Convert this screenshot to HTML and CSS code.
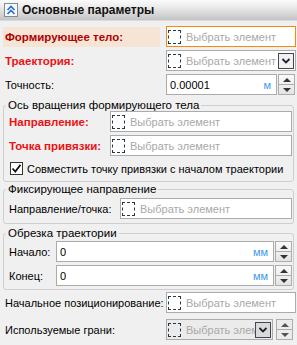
FILE: index.html
```html
<!DOCTYPE html>
<html lang="ru">
<head>
    <meta charset="UTF-8">
    <title>Основные параметры</title>
    <link rel="stylesheet" href="styles.css">
</head>
<body>
    <div class="panel">
        <div class="header">
            <span class="collapse">
                <svg width="10" height="10" viewBox="0 0 10 10"><path d="M1.5 5 L5 1.5 L8.5 5 M1.5 9 L5 5.5 L8.5 9" fill="none" stroke="#1f6fd0" stroke-width="1.6"/></svg>
            </span>
            <span class="title">Основные параметры</span>
        </div>

        <div class="row r1">
            <div class="label hl">Формирующее тело:</div>
            <div class="field active"><span class="pick"></span><span class="ph">Выбрать элемент</span></div>
        </div>
        <div class="row r2">
            <div class="label red">Траектория:</div>
            <div class="field"><span class="pick"></span><span class="ph">Выбрать элемент</span><span class="drop"><svg width="10" height="8" viewBox="0 0 10 8"><path d="M1.5 2 L5 5.5 L8.5 2" fill="none" stroke="#223" stroke-width="1.8"/></svg></span></div>
        </div>
        <div class="row r3 sp">
            <div class="label">Точность:</div>
            <div class="field num"><span class="val">0.00001</span><span class="unit">м</span></div>
            <div class="spin"><span class="up"></span><span class="dn"></span></div>
        </div>

        <fieldset class="group g1">
            <legend>Ось вращения формирующего тела</legend>
            <div class="row">
                <div class="label red w1">Направление:</div>
                <div class="field"><span class="pick"></span><span class="ph">Выбрать элемент</span></div>
            </div>
            <div class="row">
                <div class="label red w1">Точка привязки:</div>
                <div class="field"><span class="pick"></span><span class="ph">Выбрать элемент</span></div>
            </div>
            <label class="check">
                <span class="box"><svg width="11" height="11" viewBox="0 0 11 11"><path d="M1.5 5.5 L4.3 8.5 L9.5 1.8" fill="none" stroke="#111" stroke-width="1.8"/></svg></span>
                Совместить точку привязки с началом траектории
            </label>
        </fieldset>

        <fieldset class="group g2">
            <legend>Фиксирующее направление</legend>
            <div class="row">
                <div class="label w2">Направление/точка:</div>
                <div class="field"><span class="pick"></span><span class="ph">Выбрать элемент</span></div>
            </div>
        </fieldset>

        <fieldset class="group g3">
            <legend>Обрезка траектории</legend>
            <div class="row">
                <div class="label w3">Начало:</div>
                <div class="field num"><span class="val">0</span><span class="unit">мм</span></div>
                <div class="spin"><span class="up"></span><span class="dn"></span></div>
            </div>
            <div class="row">
                <div class="label w3">Конец:</div>
                <div class="field num"><span class="val">0</span><span class="unit">мм</span></div>
                <div class="spin"><span class="up"></span><span class="dn"></span></div>
            </div>
        </fieldset>

        <div class="row r4">
            <div class="label">Начальное позиционирование:</div>
            <div class="field"><span class="pick"></span><span class="ph">Выбрать элемент</span></div>
        </div>
        <div class="row r5">
            <div class="label">Используемые грани:</div>
            <div class="field off"><span class="pick"></span><span class="ph">Выбрать элемент</span><span class="drop"><svg width="10" height="8" viewBox="0 0 10 8"><path d="M1.5 2 L5 5.5 L8.5 2" fill="none" stroke="#223" stroke-width="1.8"/></svg></span></div>
            <div class="spin off"><span class="up"></span><span class="dn"></span></div>
        </div>
    </div>
</body>
</html>
```

FILE: styles.css
```css
* {
    box-sizing: border-box;
}
body {
    margin: 0;
    background: #f0f0f0;
    font-family: 'Liberation Sans', Arial, sans-serif;
    font-size: 11px;
    color: #000;
}
.panel {
    width: 297px;
    height: 345px;
    overflow: hidden;
}
.header {
    height: 21px;
    display: flex;
    align-items: center;
    background: linear-gradient(#fbfbfb, #e8e8e8 40%, #c4c4c4);
    border-bottom: 1px solid #dadada;
}
.collapse {
    width: 14px;
    height: 14px;
    margin-left: 4px;
    border: 1px solid #7f8c99;
    background: #f8f8f8;
    display: flex;
    align-items: center;
    justify-content: center;
}
.title {
    margin-left: 4px;
    font-weight: bold;
    font-size: 12px;
    color: #111;
}
.row {
    display: flex;
    align-items: center;
    height: 21px;
    padding-right: 1px;
}
.r1 { margin-top: 5px; }
.r2 { margin-top: 3px; }
.r3 { margin-top: 3px; }
.r4 { margin-top: 2px; }
.r5 { margin-top: 6px; }
.row.sp {
    padding-right: 2px;
}
.label {
    width: 166px;
    flex: none;
    padding-left: 5px;
    white-space: nowrap;
}
.label.hl {
    width: 157px;
    margin-left: 3px;
    margin-right: 6px;
    padding-left: 2px;
    height: 20px;
    line-height: 20px;
    background: #f6e4d4;
    color: #b00000;
    font-weight: bold;
    font-size: 11.5px;
}
.label.red {
    color: #ee1111;
    font-weight: bold;
    font-size: 11.5px;
}
.field {
    flex: 1;
    min-width: 0;
    height: 21px;
    display: flex;
    align-items: center;
    border: 1px solid #ababab;
    background: #fff;
    overflow: hidden;
    white-space: nowrap;
}
.field.active {
    border-color: #f58a0a;
}
.field.off {
    background: #ebebeb;
    flex: none;
    width: 107px;
}
.pick {
    width: 13px;
    height: 14px;
    margin: 0 5px 0 1px;
    border: 1px dashed #23384a;
    flex: none;
}
.ph {
    flex: 1;
    min-width: 0;
    color: #a8a8a8;
    overflow: hidden;
}
.drop {
    width: 16px;
    height: 16px;
    margin-right: 1px;
    border: 1px solid #3e4752;
    background: #f2f2f2;
    display: flex;
    align-items: center;
    justify-content: center;
    flex: none;
}
.field.off .drop {
    background: #dadada;
}
.num .val {
    flex: 1;
    padding-left: 3px;
}
.num .unit {
    color: #3a9af0;
    padding-right: 5px;
}
.spin {
    width: 17px;
    height: 21px;
    margin-left: 1px;
    flex: none;
    border: 1px solid #adadad;
    display: flex;
    flex-direction: column;
    background: linear-gradient(#fafafa, #e4e4e4);
}
.spin.off {
    margin-left: 3px;
    background: #ebebeb;
}
.spin span {
    flex: 1;
    display: flex;
    align-items: center;
    justify-content: center;
}
.spin .up {
    border-bottom: 1px solid #adadad;
}
.spin .up::after {
    content: "";
    border-left: 4px solid transparent;
    border-right: 4px solid transparent;
    border-bottom: 4px solid #333;
}
.spin .dn::after {
    content: "";
    border-left: 4px solid transparent;
    border-right: 4px solid transparent;
    border-top: 4px solid #333;
}
.spin.off span::after {
    border-top-color: #555;
    border-bottom-color: #555;
}
.group {
    margin: 0 3px;
    padding: 0;
    border: 1px solid #cfcfcf;
    border-radius: 3px;
    min-width: 0;
}
.group legend {
    padding: 0 2px;
    margin-left: 2px;
    line-height: 12px;
    font-size: 11.5px;
}
.group .row {
    margin-top: 3px;
    padding-right: 1px;
}
.w1 { width: 106px; }
.w2 { width: 116px; }
.w3 { width: 52px; }
.g1 {
    margin-top: 4px;
    padding-bottom: 6px;
}
.g1 .row:first-of-type { margin-top: 0; }
.g2 {
    margin-top: 1px;
    padding-bottom: 4px;
}
.g3 {
    margin-top: 3px;
    padding-bottom: 3px;
}
.g3 .row:first-of-type { margin-top: 2px; }
.check {
    display: flex;
    align-items: center;
    height: 13px;
    margin: 6px 0 0 6px;
    white-space: nowrap;
    font-size: 11px;
}
.box {
    width: 13px;
    height: 13px;
    flex: none;
    border: 1px solid #333;
    background: #fff;
    margin-right: 4px;
    display: flex;
    align-items: center;
    justify-content: center;
}
```
